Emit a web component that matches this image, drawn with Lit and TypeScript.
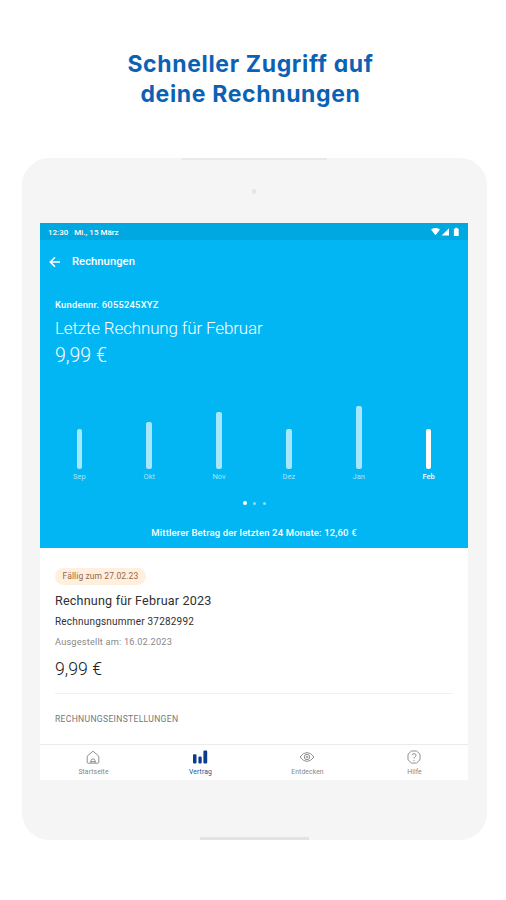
import { LitElement, html, css, svg } from "lit";
import { customElement } from "lit/decorators.js";
import { classMap } from "lit/directives/class-map.js";

const MONTHS = [
  { name: "Sep", height: 40 },
  { name: "Okt", height: 47.5 },
  { name: "Nov", height: 57 },
  { name: "Dez", height: 40 },
  { name: "Jan", height: 63.5 },
  { name: "Feb", height: 40, active: true },
];

const home = svg`<path d="M1.2 6.2 L7 1.2 L12.8 6.2 V12.3 Q12.8 13.2 11.9 13.2 H2.1 Q1.2 13.2 1.2 12.3 Z M4.9 13 V10.8 Q4.9 8.9 7 8.9 Q9.1 8.9 9.1 10.8 V13 M4.5 11.6 H9.5"/>`;
const bars = svg`<path class="solid" d="M0 5.2 q0-1 1-1 h1.5 q1 0 1 1 V12.6 q0 1-1 1 H1 q-1 0-1-1 Z M5.4 7.4 q0-1 1-1 h1.3 q1 0 1 1 V12.6 q0 1-1 1 H6.4 q-1 0-1-1 Z M10.4 1.4 q0-1 1-1 h1.8 q1 0 1 1 V12.6 q0 1-1 1 h-1.8 q-1 0-1-1 Z"/>`;
const eye = svg`<path d="M0 7 Q3.2 2.6 7 2.6 Q10.8 2.6 14 7 Q10.8 11.4 7 11.4 Q3.2 11.4 0 7 Z"/><circle cx="7" cy="7" r="2.7"/><circle cx="7" cy="7" r=".8"/>`;
const help = svg`<path d="M4.4 1 H9.6 L13 4.2 V9.8 L9.6 13 H4.4 L1 9.8 V4.2 Z M5 5.2 Q5.2 3.7 7 3.7 Q9 3.7 9 5.3 Q9 6.3 7.9 6.9 Q7 7.4 7 8.6 M7 10 V11"/>`;

const TABS = [
  { label: "Startseite", icon: home },
  { label: "Vertrag", icon: bars, active: true },
  { label: "Entdecken", icon: eye },
  { label: "Hilfe", icon: help },
];

@customElement("app-root")
export class AppRoot extends LitElement {
  static styles = css`
    :host {
      display: block;
      box-sizing: border-box;
      width: 506px;
      height: 900px;
      padding: 49px 0 0 22px;
      background: #fff;
      font-family: Roboto, "Liberation Sans", sans-serif;
      overflow: hidden;
    }
    * { box-sizing: border-box; }
    h1, h2, p { margin: 0; font-weight: 400; white-space: nowrap; }
    .headline {
      width: 457px;
      height: 109px;
      font: 700 23px/30px Inter, Lato, sans-serif;
      font-feature-settings: "cv11" 1;
      letter-spacing: 0.65px;
      text-align: center;
      color: #0b62b5;
    }
    .device {
      width: 465px;
      height: 682px;
      padding-right: 1px;
      border-radius: 27px;
      background: #f5f5f5;
      display: flex;
      flex-direction: column;
      align-items: center;
    }
    .top-edge { width: 145px; height: 2px; background: #e9e9eb; }
    .camera { width: 4px; height: 5px; border-radius: 2px; margin: 29px 0 29px; background: #e4e4e5; }
    .bottom-edge { width: 109px; height: 3px; margin-top: auto; background: #e3e3e6; }
    .screen {
      width: 428px;
      height: 557px;
      background: #fff;
      display: flex;
      flex-direction: column;
    }
    .status {
      height: 17px;
      flex: none;
      padding: 1px 8px 0 8px;
      display: flex;
      align-items: center;
      background: #00a8e1;
      color: #fff;
      font-size: 8px;
      font-weight: 500;
    }
    .status .date { margin-left: 6px; }
    .status svg { margin-left: auto; width: 29px; height: 10px; fill: #fff; }
    .blue {
      height: 308px;
      flex: none;
      background: #02b5f3;
      color: #fff;
      display: flex;
      flex-direction: column;
    }
    .bar { height: 43px; padding-left: 9px; display: flex; align-items: center; }
    .bar svg { width: 12px; height: 12px; fill: none; stroke: #fff; stroke-width: 1.6; }
    .bar h2 { margin-left: 11px; font-size: 11.3px; font-weight: 500; }
    .summary { height: 96px; padding: 15px 0 0 15px; }
    .customer { font-size: 9.4px; line-height: 14px; font-weight: 500; letter-spacing: 0.22px; }
    .last { font-size: 17px; line-height: 24px; margin-top: 4px; font-weight: 300; letter-spacing: -0.15px; }
    .total { font-size: 19.5px; line-height: 28px; margin-top: 2px; font-weight: 300; }
    .chart { height: 103px; margin-bottom: 17px; padding: 0 4.5px; display: grid; grid-template-columns: repeat(6, 1fr); }
    .month { display: flex; flex-direction: column; align-items: center; justify-content: flex-end; color: #a6e5fc; font-size: 7.5px; line-height: 10px; }
    .column { width: 5.6px; border-radius: 2px; background: #a6e7fd; margin-bottom: 3px; }
    .month.active { color: #fff; font-weight: 500; }
    .month.active .column { background: #fff; }
    .dots { display: flex; gap: 6.5px; align-items: center; justify-content: center; height: 8px; }
    .dot { width: 3px; height: 3px; border-radius: 50%; background: #8bdefb; }
    .dot.current { width: 4px; height: 4px; background: #fff; }
    .average { margin-top: 19px; text-align: center; font-size: 9.5px; line-height: 14px; font-weight: 500; letter-spacing: 0.15px; }
    .invoice { flex: 1; padding: 20px 15px 0; display: flex; flex-direction: column; align-items: flex-start; color: #303030; }
    .due { height: 17px; padding: 0 7.5px; border-radius: 9px; background: #ffefdf; color: #94684c; font-size: 8.5px; line-height: 17px; letter-spacing: 0.1px; }
    .title { font-size: 12.6px; line-height: 18px; margin-top: 7px; letter-spacing: 0.18px; }
    .number { font-size: 10px; line-height: 14px; margin-top: 5px; letter-spacing: 0.2px; }
    .issued { font-size: 9.2px; line-height: 14px; margin-top: 6px; letter-spacing: 0.2px; color: #888; }
    .amount { font-size: 17.7px; line-height: 24px; margin-top: 8px; font-weight: 300; color: #222; }
    .rule { width: 100%; height: 1px; margin-top: 12px; background: #f0f0f0; }
    .settings { font-size: 8.6px; line-height: 12px; margin-top: 19px; letter-spacing: 0.3px; color: #777; }
    .tabs { height: 36px; flex: none; border-top: 1px solid #ebebeb; display: grid; grid-template-columns: repeat(4, 1fr); }
    .tab { display: flex; flex-direction: column; align-items: center; padding-top: 5px; color: #858585; font-size: 6.8px; line-height: 9px; letter-spacing: 0.1px; }
    .tab svg { width: 14px; height: 14px; margin: 0 1px 4px 0; overflow: visible; fill: none; stroke: #858585; stroke-width: 0.9; }
    .tab .solid { fill: #0b3b8c; stroke: none; }
    .tab.active { color: #0d5599; }
  `;

  render() {
    return html`
      <h1 class="headline">Schneller Zugriff auf<br />deine Rechnungen</h1>
      <div class="device">
        <div class="top-edge"></div>
        <div class="camera"></div>
        <div class="screen">
          <div class="status">
            <span>12:30</span><span class="date">Mi., 15 März</span>
            <svg viewBox="0 0 29 10">
              <path d="M0 2.4 Q4.5 -0.2 9 2.4 L4.5 8.2 Z M18 1.2 V8.4 H10.6 Z M22.9 1.7 H24.2 V0.8 H26.4 V1.7 H27.7 V9 H22.9 Z" />
            </svg>
          </div>
          <div class="blue">
            <div class="bar">
              <svg viewBox="0 0 12 12"><path d="M11 6 H1.5 M6 1.2 L1.3 6 L6 10.8" /></svg>
              <h2>Rechnungen</h2>
            </div>
            <div class="summary">
              <p class="customer">Kundennr. 6055245XYZ</p>
              <p class="last">Letzte Rechnung für Februar</p>
              <p class="total">9,99 €</p>
            </div>
            <div class="chart">
              ${MONTHS.map(
                (m) => html`<div class=${classMap({ month: true, active: !!m.active })}>
                  <div class="column" style="height:${m.height}px"></div>
                  <span>${m.name}</span>
                </div>`
              )}
            </div>
            <div class="dots"><i class="dot current"></i><i class="dot"></i><i class="dot"></i></div>
            <p class="average">Mittlerer Betrag der letzten 24 Monate: 12,60 €</p>
          </div>
          <div class="invoice">
            <span class="due">Fällig zum 27.02.23</span>
            <p class="title">Rechnung für Februar 2023</p>
            <p class="number">Rechnungsnummer 37282992</p>
            <p class="issued">Ausgestellt am: 16.02.2023</p>
            <p class="amount">9,99 €</p>
            <div class="rule"></div>
            <p class="settings">RECHNUNGSEINSTELLUNGEN</p>
          </div>
          <div class="tabs">
            ${TABS.map(
              (t) => html`<div class=${classMap({ tab: true, active: !!t.active })}>
                <svg viewBox="0 0 14 14">${t.icon}</svg>
                <span>${t.label}</span>
              </div>`
            )}
          </div>
        </div>
        <div class="bottom-edge"></div>
      </div>
    `;
  }
}
